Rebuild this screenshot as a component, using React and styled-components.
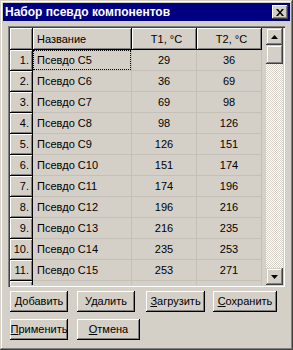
import React from 'react';
import styled, { createGlobalStyle } from 'styled-components';

const GlobalStyle = createGlobalStyle`
  html, body {
    margin: 0;
    padding: 0;
    background: #d4d0c8;
  }
  * {
    box-sizing: border-box;
  }
`;

const Window = styled.div`
  width: 293px;
  height: 350px;
  padding: 3px;
  background: #d4d0c8;
  font-family: "Liberation Sans", Arial, sans-serif;
  font-size: 11px;
  line-height: 13px;
  color: #000;
  box-shadow: inset -1px -1px #404040, inset 1px 1px #d4d0c8,
    inset -2px -2px #808080, inset 2px 2px #fff;
  display: flex;
  flex-direction: column;
`;

const TitleBar = styled.div`
  height: 18px;
  background: #000080;
  display: flex;
  align-items: center;
  justify-content: space-between;
  padding: 0 2px 0 2px;
`;

const Title = styled.span`
  color: #fff;
  font-weight: bold;
  font-size: 12px;
`;

const CloseBtn = styled.div`
  width: 16px;
  height: 14px;
  background: #d4d0c8;
  box-shadow: inset -1px -1px #404040, inset 1px 1px #fff,
    inset -2px -2px #808080, inset 2px 2px #d4d0c8;
  display: flex;
  align-items: center;
  justify-content: center;
`;

const Body = styled.div`
  padding: 5px 5px 0 5px;
  display: flex;
  flex-direction: column;
`;

const GridBox = styled.div`
  height: 261px;
  display: flex;
  padding: 2px;
  box-shadow: inset 1px 1px #808080, inset 2px 2px #404040,
    inset -1px -1px #fff, inset -2px -2px #d4d0c8;
`;

const TableArea = styled.div`
  flex: 1;
  overflow: hidden;
`;

const Row = styled.div`
  display: grid;
  grid-template-columns: 23px 99px 65px 65px;
  height: ${p => p.$h}px;
`;

const HeadCell = styled.div`
  display: flex;
  align-items: center;
  justify-content: ${p => (p.$center ? 'center' : 'flex-start')};
  padding-left: 4px;
  background: #d4d0c8;
  box-shadow: inset -1px -1px #000, inset 1px 1px #fff,
    inset -2px -2px #808080;
`;

const NumCell = styled(HeadCell)`
  justify-content: flex-end;
  padding-right: 4px;
  padding-left: 0;
`;

const Cell = styled.div`
  display: flex;
  align-items: center;
  justify-content: ${p => (p.$center ? 'center' : 'flex-start')};
  padding-left: ${p => (p.$center ? 0 : 4)}px;
  border-right: 1px solid #c4c0b8;
  border-bottom: 1px solid #c4c0b8;
  position: relative;
`;

const Focus = styled.div`
  position: absolute;
  inset: 0 0 0 0;
  border: 1px dotted #000;
  pointer-events: none;
`;

const ScrollBar = styled.div`
  width: 17px;
  display: flex;
  flex-direction: column;
  background: repeating-conic-gradient(#fff 0 25%, #d4d0c8 0 50%) 0 0 / 2px 2px;
`;

const ScrollBtn = styled.div`
  height: ${p => p.$h || 17}px;
  background: #d4d0c8;
  box-shadow: inset -1px -1px #404040, inset 1px 1px #d4d0c8,
    inset -2px -2px #808080, inset 2px 2px #fff;
  display: flex;
  align-items: center;
  justify-content: center;
`;

const Track = styled.div`
  flex: 1;
`;

const ButtonRow = styled.div`
  display: flex;
  margin-top: ${p => p.$top}px;
`;

const Button = styled.div`
  width: ${p => p.$w}px;
  margin-left: ${p => p.$ml}px;
  height: 21px;
  background: #d4d0c8;
  box-shadow: inset -1px -1px #000, inset 1px 1px #fff,
    inset -2px -2px #808080;
  display: flex;
  align-items: center;
  justify-content: center;
  white-space: nowrap;
  u {
    text-decoration: underline;
    text-underline-offset: 1px;
  }
`;

const Arrow = ({ down }) => (
  <svg width="7" height="4" viewBox="0 0 7 4">
    <polygon points={down ? '0,0 7,0 3.5,4' : '0,4 7,4 3.5,0'} fill="#000" />
  </svg>
);

const rows = [
  ['Псевдо С5', 29, 36],
  ['Псевдо С6', 36, 69],
  ['Псевдо С7', 69, 98],
  ['Псевдо С8', 98, 126],
  ['Псевдо С9', 126, 151],
  ['Псевдо С10', 151, 174],
  ['Псевдо С11', 174, 196],
  ['Псевдо С12', 196, 216],
  ['Псевдо С13', 216, 235],
  ['Псевдо С14', 235, 253],
  ['Псевдо С15', 253, 271],
  ['Псевдо С16', 271, 288],
];

const App = () => (
  <Window>
    <GlobalStyle />
    <TitleBar>
      <Title>Набор псевдо компонентов</Title>
      <CloseBtn>
        <svg width="8" height="7" viewBox="0 0 8 7">
          <path d="M0 0h2l2 2.5L6 0h2L5 3.5 8 7H6L4 4.5 2 7H0l3-3.5z" fill="#000" />
        </svg>
      </CloseBtn>
    </TitleBar>
    <Body>
      <GridBox>
        <TableArea>
          <Row $h={22}>
            <HeadCell />
            <HeadCell>Название</HeadCell>
            <HeadCell $center>T1, °C</HeadCell>
            <HeadCell $center>T2, °C</HeadCell>
          </Row>
          {rows.map((r, i) => (
            <Row $h={21} key={i}>
              <NumCell>{i + 1}.</NumCell>
              <Cell>
                {r[0]}
                {i === 0 && <Focus />}
              </Cell>
              <Cell $center>{r[1]}</Cell>
              <Cell $center>{r[2]}</Cell>
            </Row>
          ))}
        </TableArea>
        <ScrollBar>
          <ScrollBtn><Arrow /></ScrollBtn>
          <ScrollBtn $h={19} />
          <Track />
          <ScrollBtn><Arrow down /></ScrollBtn>
        </ScrollBar>
      </GridBox>
      <ButtonRow $top={4}>
        <Button $w={58} $ml={2}>Добавить</Button>
        <Button $w={58} $ml={9}>Удалить</Button>
        <Button $w={59} $ml={11}><u>З</u>агрузить</Button>
        <Button $w={64} $ml={8}><u>С</u>охранить</Button>
      </ButtonRow>
      <ButtonRow $top={7}>
        <Button $w={58} $ml={2}><u>П</u>рименить</Button>
        <Button $w={63} $ml={9}><u>О</u>тмена</Button>
      </ButtonRow>
    </Body>
  </Window>
);

export default App;
